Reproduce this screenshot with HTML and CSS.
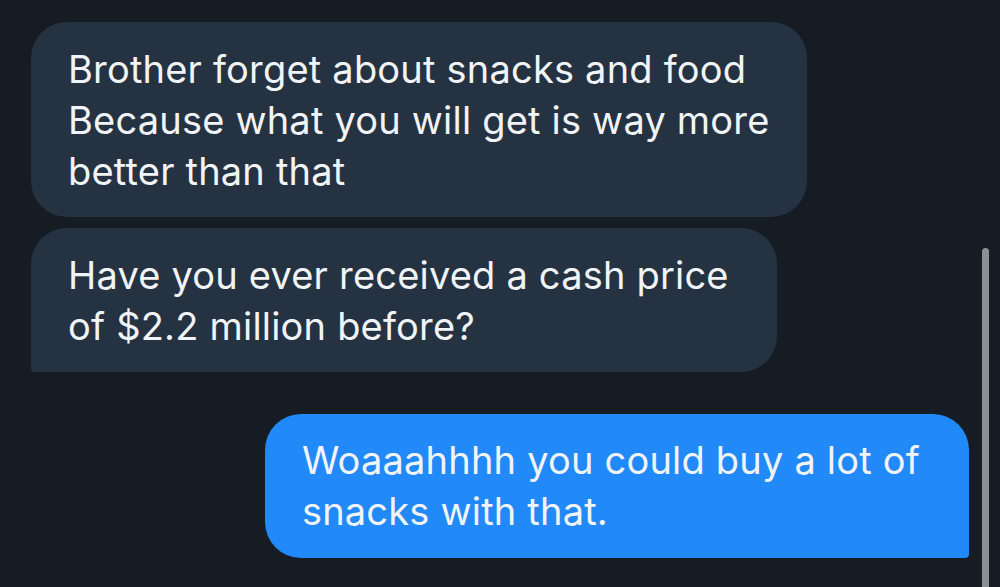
FILE: index.html
```html
<!DOCTYPE html>
<html lang="en">
<head>
    <meta charset="UTF-8">
    <meta name="viewport" content="width=device-width, initial-scale=1.0">
    <title>Chat</title>
    <link rel="stylesheet" href="styles.css">
</head>
<body>
    <div class="chat">
        <div class="message message-in message-first">
            Brother forget about snacks and food<br>
            Because what you will get is way more<br>
            better than that
        </div>
        <div class="message message-in message-last">
            Have you ever received a cash price<br>
            of $2.2 million before?
        </div>
        <div class="message message-out">
            Woaaahhhh you could buy a lot of<br>
            snacks with that.
        </div>
    </div>
    <div class="scrollbar"></div>
</body>
</html>
```

FILE: styles.css
```css
:root {
    --bg: #161c24;
    --bubble-in: #253241;
    --bubble-out: #2189f8;
    --text: #f1f4f7;
    --thumb: #8c8f94;
}

* {
    margin: 0;
    padding: 0;
    box-sizing: border-box;
}

html, body {
    height: 100%;
    overflow: hidden;
}

body {
    font-family: Inter, 'Noto Sans', sans-serif;
    background: var(--bg);
    color: var(--text);
}

.chat {
    display: flex;
    flex-direction: column;
    align-items: flex-start;
    padding: 22px 31px;
}

.message {
    font-size: 38px;
    line-height: 51px;
    letter-spacing: 0.2px;
    padding: 22px 37px 20px 37px;
    border-radius: 36px;
    background: var(--bubble-in);
}

.message-first {
    margin-bottom: 11px;
}

.message-last {
    border-bottom-left-radius: 4px;
    padding-right: 48px;
}

.message-out {
    align-self: flex-end;
    margin-top: 42px;
    padding: 21px 49px 21px 37px;
    background: var(--bubble-out);
    border-bottom-right-radius: 4px;
}

.scrollbar {
    position: absolute;
    top: 248px;
    right: 11px;
    width: 7px;
    height: 360px;
    border-radius: 4px;
    background: var(--thumb);
}
```
